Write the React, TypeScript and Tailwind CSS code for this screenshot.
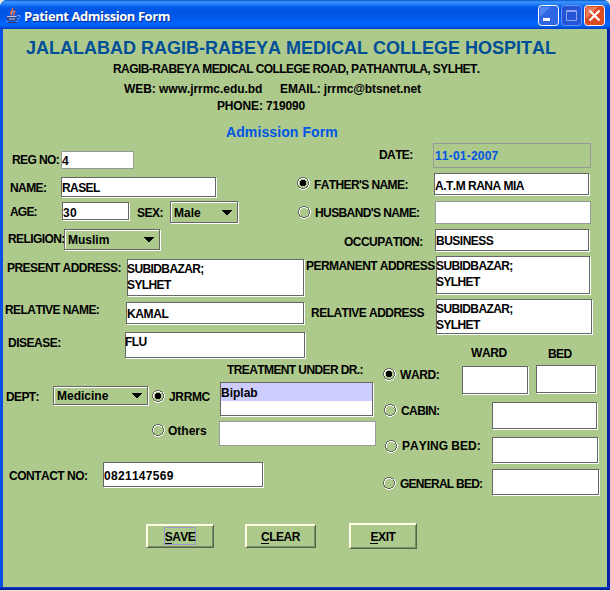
import React from "react";

type BoxProps = { className?: string; children?: React.ReactNode };

function Label({ className = "", children }: BoxProps) {
  return (
    <span className={`block shrink-0 whitespace-pre text-[12px] leading-[14px] ${className}`}>{children}</span>
  );
}

function Field({ className = "", children }: BoxProps) {
  return (
    <div
      className={`shrink-0 whitespace-pre border border-[#666666] bg-white text-[12px] leading-[14px] shadow-[1px_1px_0_#ffffff] ${className}`}
    >
      {children}
    </div>
  );
}

function TextArea({ className = "", children }: BoxProps) {
  return (
    <Field className={className}>
      <div className="-ml-px pt-px leading-[16px] tracking-[-0.6px]">{children}</div>
    </Field>
  );
}

function DisabledField({ className = "", children }: BoxProps) {
  return (
    <div className={`shrink-0 whitespace-pre border border-[#999999] text-[12px] leading-[14px] ${className}`}>
      {children}
    </div>
  );
}

function Combo({ className = "", children }: BoxProps) {
  return (
    <div
      className={`flex shrink-0 justify-between border border-[#666666] pl-[3px] pr-[5px] text-[12px] leading-[14px] shadow-[1px_1px_0_#ffffff,inset_1px_1px_0_#ffffff] ${className}`}
    >
      <span>{children}</span>
      <svg className="mt-1" width="10" height="5" viewBox="0 0 10 5" shapeRendering="crispEdges">
        <path d="M0 0h10v1H9v1H8v1H7v1H6v1H4V4H3V3H2V2H1V1H0z" fill="#000" />
      </svg>
    </div>
  );
}

function Radio({ className = "", checked = false }: { className?: string; checked?: boolean }) {
  return (
    <svg className={`shrink-0 ${className}`} width="13" height="13" viewBox="0 0 13 13" shapeRendering="crispEdges">
      <path
        d="M4 1h4v1H4zM2 2h2v1H2zM8 2h2v1H8zM2 3h1v1H2zM1 4h1v4H1zM11 2h1v2h-1zM12 4h1v4h-1zM11 8h1v2h-1zM10 10h1v1h-1zM8 11h2v1H8zM4 12h4v1H4zM2 11h2v1H2z"
        fill="#fff"
      />
      <path d="M4 0h4v1H4zM2 1h2v1H2zM8 1h2v1H8zM1 2h1v2H1zM10 2h1v2h-1zM0 4h1v4H0zM11 4h1v4h-1zM1 8h1v2H1zM10 8h1v2h-1zM2 10h2v1H2zM8 10h2v1H8zM4 11h4v1H4z" fill="#666" />
      {checked && <path d="M4 3h4v1h1v4H8v1H4V8H3V4h1z" fill="#000" />}
    </svg>
  );
}

function PushButton({ className = "", children }: BoxProps) {
  return (
    <button
      className={`flex shrink-0 justify-center border border-b-[#57654a] border-l-white border-r-[#57654a] border-t-white text-[12px] font-bold leading-[14px] shadow-[inset_1px_1px_0_#ffffc8,inset_-1px_-1px_0_#7a8d62] ${className}`}
    >
      {children}
    </button>
  );
}

function Mnemonic({ children }: BoxProps) {
  return <span className="inline-block h-[14px] border-b border-black">{children}</span>;
}

function JavaCup() {
  return (
    <svg className="ml-[5px] mt-[7px] shrink-0" width="17" height="17" viewBox="0 0 17 17" fill="none">
      <path d="M7 8.500C3.500 6 8.500 4.500 7.500 1M9 8.500C7.500 6.500 11 5.500 9.500 3.500" stroke="#f0683a" strokeWidth="1.500" />
      <path d="M6 6.500l2.500-2.500" stroke="#ffd8c0" />
      <path d="M1.500 9h10.500c0 3-1 5-2.500 5H4c-1.500 0-2.500-2-2.500-5z" fill="#2f4688" />
      <path d="M2 9.500h9.500M4 12h6" stroke="#b8c8ec" />
      <path d="M12 8.500h3v2l-3 2M1 14c3 2 9 2 12 0" stroke="#8095cf" />
      <path d="M3 15.500h9" stroke="#26306c" />
    </svg>
  );
}

function TitleBar() {
  return (
    <header className="flex h-[29px] shrink-0 rounded-t-[7px] bg-[linear-gradient(to_bottom,#0958c8_0px,#3d96ff_2px,#2482fa_4px,#0560ea_7px,#0054e3_10px,#0059ec_17px,#0066ff_24px,#0060f8_26px,#003fc4_29px)]">
      <JavaCup />
      <span className="ml-[2px] mt-[7px] w-[516px] whitespace-nowrap font-['Open_Sans',sans-serif] text-[13px] font-bold leading-[18px] tracking-[-0.43px] text-white [text-shadow:1px_1px_0_#06298b]">
        Patient Admission Form
      </span>
      <div className="-ml-[2px] mt-[5px] flex gap-[2px]">
        <svg width="21" height="21" viewBox="0 0 21 21">
          <rect x=".5" y=".5" width="20" height="20" rx="3" fill="#2f67e3" stroke="#fff" />
          <path d="M2 2h10L2 12z" fill="#6d9bfa" opacity=".6" />
          <path d="M5 13h7v3H5z" fill="#fff" />
        </svg>
        <svg width="21" height="21" viewBox="0 0 21 21">
          <rect x=".5" y=".5" width="20" height="20" rx="3" fill="#2455d6" stroke="#6b92ec" />
          <path d="M5.500 5.500h10v10h-10zM5 6.500h11" fill="none" stroke="#8fa4ea" />
        </svg>
        <svg width="21" height="21" viewBox="0 0 21 21">
          <rect x=".5" y=".5" width="20" height="20" rx="3" fill="#dc4a20" stroke="#fff" />
          <path d="M2 2h12L2 14z" fill="#f49a80" opacity=".6" />
          <path d="M5.500 5.500l10 10M15.500 5.500l-10 10" stroke="#fff" strokeWidth="2.300" />
        </svg>
      </div>
    </header>
  );
}

export default function App() {
  return (
    <div className="h-[591px] w-[610px] overflow-hidden bg-[#ece9d8] font-['Liberation_Sans',Arial,sans-serif] font-bold text-black [font-kerning:none]">
      <div className="flex h-[590px] flex-col rounded-t-[7px] bg-[linear-gradient(to_bottom,#0a3fc8_587px,#0831c8_588px,#001f9c_589px,#00138c_590px)]">
        <TitleBar />
        <main className="h-[558px] border-l-[3px] border-r-[3px] border-l-[#0a50e8] border-r-[#0020a8] bg-[#adc98c]">
          <div className="h-[114px] whitespace-pre">
            <h1 className="ml-[23px] pt-[9px] text-[18px] leading-[20px] text-[#004e98]">
              JALALABAD RAGIB-RABEYA MEDICAL COLLEGE HOSPITAL
            </h1>
            <Label className="ml-[110px] mt-1 tracking-[-0.57px]">
              RAGIB-RABEYA MEDICAL COLLEGE ROAD, PATHANTULA, SYLHET.
            </Label>
            <div className="ml-[121px] mt-[6px] flex">
              <Label className="w-[156px] tracking-[-0.05px]">WEB: www.jrrmc.edu.bd</Label>
              <Label className="tracking-[-0.12px]">EMAIL: jrrmc@btsnet.net</Label>
            </div>
            <Label className="ml-[214px] mt-[3px] tracking-[-0.15px]">PHONE: 719090</Label>
            <h2 className="ml-[223px] mt-[11px] text-[14px] leading-[16px] tracking-[0.1px] text-[#0055e5]">
              Admission Form
            </h2>
          </div>

          <div className="flex h-[219px]">
            <section className="w-[290px] shrink-0">
              <div className="flex h-[30px] items-start">
                <Label className="ml-[9px] mt-[10px] w-[49px] tracking-[-0.6px]">REG NO:</Label>
                <DisabledField className="mt-2 h-[18px] w-[73px] bg-white pt-[2px]">4</DisabledField>
              </div>
              <div className="flex h-[26px] items-start">
                <Label className="ml-[7px] mt-2 w-[51px] tracking-[-0.6px]">NAME:</Label>
                <Field className="mt-1 h-5 w-[155px] pt-[3px] tracking-[-0.6px]">RASEL</Field>
              </div>
              <div className="flex h-[27px] items-start">
                <Label className="ml-[7px] mt-[6px] w-[52px] tracking-[-0.8px]">AGE:</Label>
                <Field className="mt-[3px] h-[18px] w-[67px] pt-[3px] tracking-[0.3px]">30</Field>
                <Label className="ml-2 mt-[7px] w-[33px] tracking-[-0.5px]">SEX:</Label>
                <Combo className="mt-[2px] h-[22px] w-[68px] pt-1">Male</Combo>
              </div>
              <div className="flex h-[28px] items-start">
                <Label className="ml-[5px] mt-[6px] w-[56px] tracking-[-0.6px]">RELIGION:</Label>
                <Combo className="mt-[3px] h-[21px] w-[96px] pt-[3px]">Muslim</Combo>
              </div>
              <div className="flex h-[45px] items-start">
                <Label className="ml-[4px] mt-[7px] w-[120px] tracking-[-0.55px]">PRESENT ADDRESS:</Label>
                <TextArea className="mt-[5px] h-[37px] w-[177px]">{"SUBIDBAZAR;\nSYLHET"}</TextArea>
              </div>
              <div className="flex h-[29px] items-start">
                <Label className="ml-[2px] mt-1 w-[121px] tracking-[-0.55px]">RELATIVE NAME:</Label>
                <Field className="mt-[3px] h-[22px] w-[178px] pt-1 tracking-[-0.4px]">KAMAL</Field>
              </div>
              <div className="flex items-start">
                <Label className="ml-[5px] mt-2 w-[117px] tracking-[-0.5px]">DISEASE:</Label>
                <TextArea className="mt-1 h-[26px] w-[180px]">FLU</TextArea>
              </div>
            </section>

            <section className="w-[314px] shrink-0">
              <div className="flex h-[28px] items-start">
                <Label className="ml-[86px] mt-[5px] w-[54px] tracking-[-0.6px]">DATE:</Label>
                <DisabledField className="h-[25px] w-[158px] pl-px pt-[5px] text-[#0055e5] tracking-[0.2px]">11-01-2007</DisabledField>
              </div>
              <div className="flex h-[28px] items-start">
                <Radio className="ml-1 mt-[6px]" checked />
                <Label className="ml-[4px] mt-[7px] w-[120px] tracking-[-0.6px]">FATHER'S NAME:</Label>
                <Field className="mt-[2px] h-[22px] w-[155px] pt-[5px] tracking-[-0.5px]">A.T.M RANA MIA</Field>
              </div>
              <div className="flex h-[27px] items-start">
                <Radio className="ml-[5px] mt-[7px]" />
                <Label className="ml-[4px] mt-[7px] w-[120px] tracking-[-0.6px]">HUSBAND'S NAME:</Label>
                <DisabledField className="mt-[2px] h-[23px] w-[156px] bg-white" />
              </div>
              <div className="flex h-[28px] items-start">
                <Label className="ml-[51px] mt-[9px] w-[91px] tracking-[-0.55px]">OCCUPATION:</Label>
                <Field className="mt-[3px] h-[22px] w-[154px] pt-1 tracking-[-0.5px]">BUSINESS</Field>
              </div>
              <div className="flex h-[43px] items-start">
                <Label className="ml-[13px] mt-[5px] w-[130px] tracking-[-0.55px]">PERMANENT ADDRESS</Label>
                <TextArea className="mt-[2px] h-[38px] w-[154px]">{"SUBIDBAZAR;\nSYLHET"}</TextArea>
              </div>
              <div className="flex h-[43px] items-start">
                <Label className="ml-[18px] mt-[9px] w-[125px] tracking-[-0.52px]">RELATIVE ADDRESS</Label>
                <TextArea className="mt-[2px] h-[35px] w-[156px]">{"SUBIDBAZAR;\nSYLHET"}</TextArea>
              </div>
              <div className="flex items-start">
                <Label className="ml-[178px] mt-[6px] w-[77px] tracking-[-0.4px]">WARD</Label>
                <Label className="mt-[7px] tracking-[-0.6px]">BED</Label>
              </div>
            </section>
          </div>

          <div className="flex h-[138px]">
            <section className="w-[375px] shrink-0">
              <div className="flex h-[93px]">
                <div className="w-[216px] shrink-0">
                  <div className="flex h-[58px] items-start">
                    <Label className="ml-[3px] mt-[28px] w-[47px] tracking-[-0.6px]">DEPT:</Label>
                    <Combo className="mt-6 h-[19px] w-[95px] pt-[2px]">Medicine</Combo>
                    <Radio className="ml-1 mt-[28px]" checked />
                    <Label className="ml-[4px] mt-[28px] tracking-[-0.35px]">JRRMC</Label>
                  </div>
                  <div className="flex items-start">
                    <Radio className="ml-[149px] mt-1" />
                    <Label className="ml-[3px] mt-1">Others</Label>
                  </div>
                </div>
                <div className="shrink-0">
                  <Label className="ml-[8px] mt-px tracking-[-0.6px]">TREATMENT UNDER DR.:</Label>
                  <Field className="ml-px mt-[5px] h-[34px] w-[153px]">
                    <div className="h-[18px] bg-[#ccccff] pt-[3px]">Biplab</div>
                  </Field>
                  <DisabledField className="mt-[5px] h-[25px] w-[157px] bg-white" />
                </div>
              </div>
              <div className="flex items-start">
                <Label className="ml-[6px] mt-[14px] w-[94px] tracking-[-0.5px]">CONTACT NO:</Label>
                <Field className="mt-[7px] h-[25px] w-[160px] pt-[6px] tracking-[0.3px]">0821147569</Field>
              </div>
            </section>

            <section className="w-[229px] shrink-0">
              <div className="flex h-[38px] items-start">
                <Radio className="ml-[5px] mt-[6px]" checked />
                <Label className="ml-[4px] mt-[6px] w-[62px] tracking-[-0.4px]">WARD:</Label>
                <Field className="mt-1 h-[28px] w-[66px]" />
                <Field className="ml-2 mt-[3px] h-[28px] w-[60px]" />
              </div>
              <div className="flex h-[34px] items-start">
                <Radio className="ml-[6px] mt-1" />
                <Label className="ml-[4px] mt-1 w-[91px] tracking-[-0.6px]">CABIN:</Label>
                <Field className="mt-[2px] h-[27px] w-[105px]" />
              </div>
              <div className="flex h-[33px] items-start">
                <Radio className="ml-[7px] mt-[6px]" />
                <Label className="ml-[4px] mt-[5px] w-[90px]">PAYING BED:</Label>
                <Field className="mt-[3px] h-[26px] w-[106px]" />
              </div>
              <div className="flex items-start">
                <Radio className="ml-[5px] mt-[10px]" />
                <Label className="ml-[4px] mt-[10px] w-[92px] tracking-[-0.75px]">GENERAL BED:</Label>
                <Field className="mt-[2px] h-[26px] w-[107px]" />
              </div>
            </section>
          </div>

          <footer className="flex items-start pl-[143px] pt-[23px]">
            <PushButton className="mt-px h-6 w-[68px] pt-[2px] tracking-[-0.5px]">
              <span className="h-[18px] border border-[#9999cc] pt-[2px]">
                <Mnemonic>S</Mnemonic>AVE
              </span>
            </PushButton>
            <PushButton className="ml-[31px] mt-px h-6 w-[71px] pt-[5px] tracking-[-0.5px]">
              <span>
                <Mnemonic>C</Mnemonic>LEAR
              </span>
            </PushButton>
            <PushButton className="ml-[33px] h-[26px] w-[68px] pt-[6px] tracking-[-0.4px]">
              <span>
                <Mnemonic>E</Mnemonic>XIT
              </span>
            </PushButton>
          </footer>
        </main>
      </div>
    </div>
  );
}
